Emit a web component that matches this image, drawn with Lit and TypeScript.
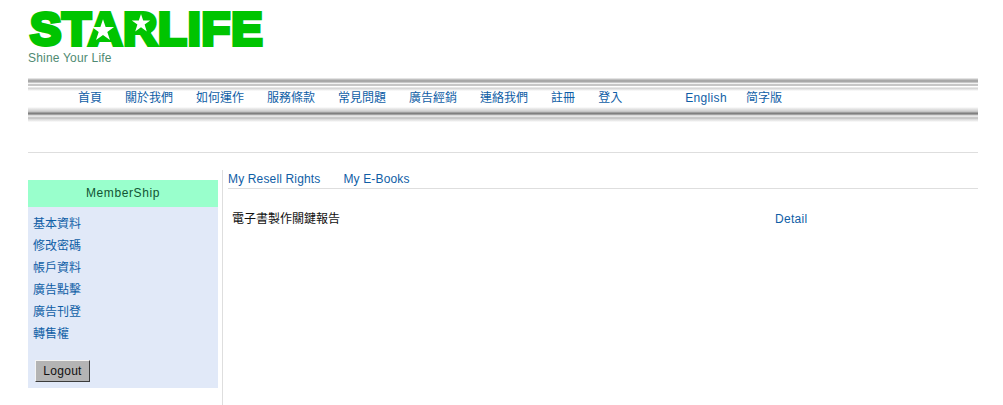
import { LitElement, html, css } from "lit";
import { customElement } from "lit/decorators.js";

const NAV = ["首頁", "關於我們", "如何運作", "服務條款", "常見問題", "廣告經銷", "連絡我們", "註冊", "登入"];
const SIDE = ["基本資料", "修改密碼", "帳戶資料", "廣告點擊", "廣告刊登", "轉售權"];
const STAR = "M50 5 L61 38 L96 38 L68 58 L79 92 L50 71 L21 92 L32 58 L4 38 L39 38 Z";

@customElement("app-root")
export class AppRoot extends LitElement {
  static styles = css`
    :host {
      display: block;
      width: 1003px;
      height: 405px;
      overflow: hidden;
      background: #fff;
      font-family: "Liberation Sans", "Noto Sans CJK TC", sans-serif;
      font-size: 12px;
      color: #0f5ea6;
    }
    .page {
      margin: 0 25px 0 28px;
      height: 405px;
      display: flex;
      flex-direction: column;
    }
    .logo {
      position: relative;
      height: 42px;
      margin-top: 8px;
      width: 240px;
    }
    .logo-text {
      font-size: 47px;
      line-height: 42px;
      height: 42px;
      padding-left: 2px;
      font-weight: 700;
      color: #00c400;
      -webkit-text-stroke: 4px #00c400;
      white-space: nowrap;
      letter-spacing: 0.9px;
    }
    .star {
      position: absolute;
    }
    .star .fill { fill: #00c400; }
    .star .mark { fill: #fff; }
    .star.a { left: 63px; top: 10px; width: 24px; height: 24px; }
    .star.b { left: 103px; top: 5px; width: 20px; height: 20px; }
    .tagline {
      height: 14px;
      line-height: 14px;
      letter-spacing: 0.2px;
      color: #4f8a72;
      margin-top: 1px;
    }
    .band-top {
      height: 13px;
      margin-top: 13px;
      background: linear-gradient(
        to bottom,
        #eeeeee 0, #d8d8d8 1px, #a8a8a8 2px, #a8a8a8 4px, #e8e8e8 5px,
        #ffffff 6px, #8f8f8f 7px, #ffffff 8px, #ffffff 9px, #d0d0d0 10px, #eeeeee 12px, #ffffff 13px
      );
    }
    .nav {
      box-sizing: border-box;
      height: 16px;
      display: flex;
      align-items: baseline;
      padding: 0 0 0 50px;
      gap: 23px;
      white-space: nowrap;
      line-height: 14px;
    }
    .nav .lang { letter-spacing: 0.35px; margin-left: 40px; }
    .nav .lang + span { margin-left: -4px; }
    .band-bottom {
      height: 15px;
      background: linear-gradient(
        to bottom,
        #ffffff 0, #e4e4e4 2px, #d0d0d0 4px, #bcbcbc 5px, #808080 6px, #808080 7px,
        #c4c4c4 8px, #f2f2f2 9px, #dcdcdc 10px, #b8b8b8 11px, #d8d8d8 12px, #eeeeee 14px, #ffffff 15px
      );
    }
    .rule {
      height: 1px;
      background: #dedede;
      margin-top: 30px;
    }
    .main {
      flex: 1;
      display: flex;
      align-items: stretch;
      min-height: 0;
    }
    .side {
      width: 190px;
      margin-top: 27px;
      align-self: flex-start;
      background: #e1e9f8;
      height: 208px;
    }
    .side-head {
      height: 27px;
      line-height: 27px;
      background: #99ffcc;
      text-align: center;
      color: #115533;
      letter-spacing: 0.6px;
    }
    .side-list {
      padding: 6px 0 0 5px;
    }
    .side-list div {
      height: 22px;
      line-height: 22px;
    }
    .logout {
      display: block;
      box-sizing: border-box;
      margin: 15px 0 0 7px;
      width: 55px;
      height: 22px;
      padding: 0;
      background: #b4b4b4;
      border: 1px solid;
      border-color: #f4f4f4 #3c3c3c #3c3c3c #f4f4f4;
      font: inherit;
      letter-spacing: 0.3px;
      color: #111;
    }
    .content {
      flex: 1;
      margin-left: 4px;
      margin-top: 17px;
      padding-left: 5px;
      border-left: 1px solid #dedede;
    }
    .tabs {
      display: flex;
      gap: 23px;
      height: 18px;
      align-items: center;
      letter-spacing: 0.15px;
      border-bottom: 1px solid #dedede;
    }
    .row {
      display: flex;
      align-items: baseline;
      height: 16px;
      margin-top: 20px;
      padding-left: 4px;
    }
    .row .title { width: 543px; color: #111; }
    .row .detail { letter-spacing: 0.3px; }
  `;

  render() {
    return html`
      <div class="page">
        <div class="logo">
          <div class="logo-text">STARLIFE</div>
          <svg class="star a" viewBox="0 0 100 100">
            <path class="fill" d="M32 0 H68 L100 100 H0 Z"></path>
            <path class="mark" d=${STAR}></path>
          </svg>
          <svg class="star b" viewBox="0 0 100 100">
            <rect class="fill" width="100" height="100"></rect>
            <path class="mark" d=${STAR}></path>
          </svg>
        </div>
        <div class="tagline">Shine Your Life</div>
        <div class="band-top"></div>
        <div class="nav">
          ${NAV.map((n) => html`<span>${n}</span>`)}
          <span class="lang">English</span>
          <span>简字版</span>
        </div>
        <div class="band-bottom"></div>
        <div class="rule"></div>
        <div class="main">
          <div class="side">
            <div class="side-head">MemberShip</div>
            <div class="side-list">
              ${SIDE.map((s) => html`<div>${s}</div>`)}
            </div>
            <button class="logout">Logout</button>
          </div>
          <div class="content">
            <div class="tabs"><span>My Resell Rights</span><span>My E-Books</span></div>
            <div class="row">
              <span class="title">電子書製作關鍵報告</span>
              <span class="detail">Detail</span>
            </div>
          </div>
        </div>
      </div>
    `;
  }
}
